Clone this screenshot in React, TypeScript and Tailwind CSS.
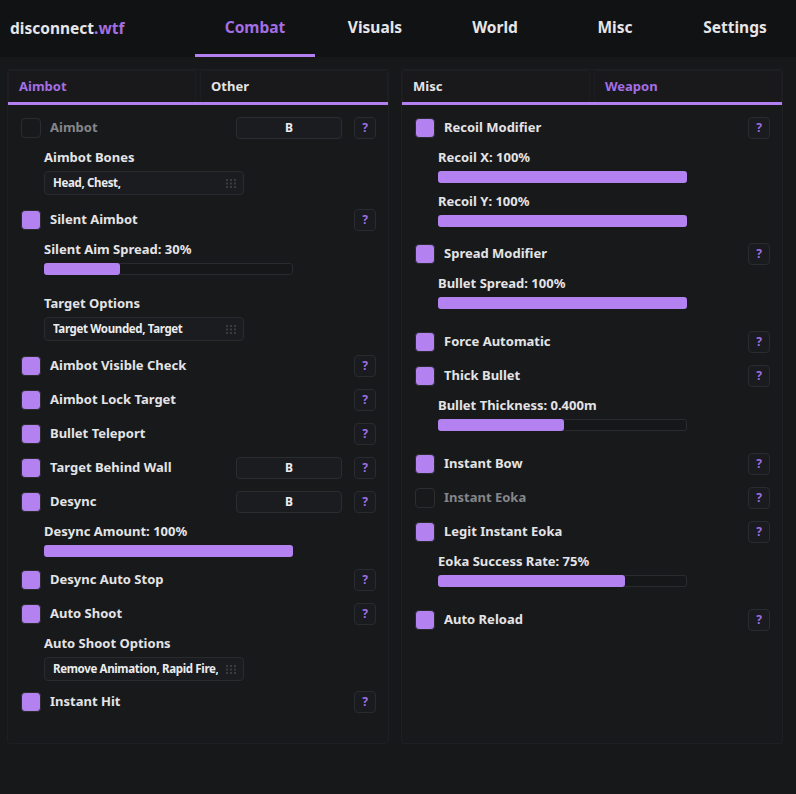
import React from "react";

type Item =
  | { kind: "check"; label: string; on: boolean; bind?: string }
  | { kind: "slider"; label: string; value: number; extra?: number }
  | { kind: "select"; label: string; value: string; extra?: number };

const leftItems: Item[] = [
  { kind: "check", label: "Aimbot", on: false, bind: "B" },
  { kind: "select", label: "Aimbot Bones", value: "Head, Chest,", extra: 2 },
  { kind: "check", label: "Silent Aimbot", on: true },
  { kind: "slider", label: "Silent Aim Spread: 30%", value: 30, extra: 10 },
  { kind: "select", label: "Target Options", value: "Target Wounded, Target", extra: 2 },
  { kind: "check", label: "Aimbot Visible Check", on: true },
  { kind: "check", label: "Aimbot Lock Target", on: true },
  { kind: "check", label: "Bullet Teleport", on: true },
  { kind: "check", label: "Target Behind Wall", on: true, bind: "B" },
  { kind: "check", label: "Desync", on: true, bind: "B" },
  { kind: "slider", label: "Desync Amount: 100%", value: 100 },
  { kind: "check", label: "Desync Auto Stop", on: true },
  { kind: "check", label: "Auto Shoot", on: true },
  { kind: "select", label: "Auto Shoot Options", value: "Remove Animation, Rapid Fire,", extra: -2 },
  { kind: "check", label: "Instant Hit", on: true },
];

const rightItems: Item[] = [
  { kind: "check", label: "Recoil Modifier", on: true },
  { kind: "slider", label: "Recoil X: 100%", value: 100 },
  { kind: "slider", label: "Recoil Y: 100%", value: 100, extra: 4 },
  { kind: "check", label: "Spread Modifier", on: true },
  { kind: "slider", label: "Bullet Spread: 100%", value: 100, extra: 10 },
  { kind: "check", label: "Force Automatic", on: true },
  { kind: "check", label: "Thick Bullet", on: true },
  { kind: "slider", label: "Bullet Thickness: 0.400m", value: 50, extra: 10 },
  { kind: "check", label: "Instant Bow", on: true },
  { kind: "check", label: "Instant Eoka", on: false },
  { kind: "check", label: "Legit Instant Eoka", on: true },
  { kind: "slider", label: "Eoka Success Rate: 75%", value: 75, extra: 10 },
  { kind: "check", label: "Auto Reload", on: true },
];

const tabs = ["Combat", "Visuals", "World", "Misc", "Settings"];

function Grip() {
  return (
    <svg width="10" height="9" viewBox="0 0 10 9" className="shrink-0">
      {[0, 1, 2].map((r) =>
        [0, 1, 2].map((c) => (
          <rect key={`${r}-${c}`} x={c * 4} y={r * 3.5} width="2" height="2" fill="#3a3b3f" />
        ))
      )}
    </svg>
  );
}

function Row({ item }: { item: Item }) {
  if (item.kind === "check") {
    return (
      <div className="flex h-[22px] items-center">
        <div
          className={
            item.on
              ? "h-5 w-5 shrink-0 rounded-[4px] border border-[#2a2b2f] bg-[#b482f0]"
              : "h-5 w-5 shrink-0 rounded-[4px] border border-[#2c2d31] bg-transparent"
          }
        />
        <span className={item.on ? "ml-[9px] text-[13px] font-bold text-[#e4e4e6]" : "ml-[9px] text-[13px] font-bold text-[#85868a]"}>
          {item.label}
        </span>
        <div className="ml-auto flex items-center gap-3">
          {item.bind && (
            <div className="flex h-[22px] w-[106px] items-center justify-center rounded-[4px] border border-[#2c2d31] bg-[#1b1c1f] text-[12px] font-bold text-[#ececee]">
              {item.bind}
            </div>
          )}
          <div className="flex h-[22px] w-[22px] items-center justify-center rounded-[4px] border border-[#2a2b2f] bg-[#1a1b1e] text-[12px] font-bold text-[#9f6ee0]">
            ?
          </div>
        </div>
      </div>
    );
  }
  if (item.kind === "slider") {
    return (
      <div className="ml-[23px]" style={{ marginBottom: item.extra ?? 0 }}>
        <div className="h-[14px] text-[13px] font-bold leading-[13px] text-[#e4e4e6]">{item.label}</div>
        <div className="mt-[6px] h-3 w-[249px] rounded-[3px] border border-[#2a2b2f] bg-[#161719]">
          <div className="-m-px h-3 rounded-[3px] bg-[#b482f0]" style={{ width: `calc(${item.value}% + 2px)` }} />
        </div>
      </div>
    );
  }
  return (
    <div className="ml-[23px]" style={{ marginBottom: item.extra ?? 0 }}>
      <div className="h-[14px] text-[13px] font-bold leading-[13px] text-[#e4e4e6]">{item.label}</div>
      <div className="mt-[6px] flex h-6 w-[200px] items-center justify-between gap-1 overflow-hidden rounded-[4px] border border-[#2a2b2f] bg-[#1b1c1f] pl-2 pr-[7px]">
        <span className="overflow-hidden whitespace-nowrap text-[11.5px] font-bold tracking-[-0.35px] text-[#ececee]">{item.value}</span>
        <Grip />
      </div>
    </div>
  );
}

function Panel({ tabs, active, items }: { tabs: string[]; active: number; items: Item[] }) {
  return (
    <div className="flex h-[675px] w-[382px] flex-col rounded-[3px] border border-[#1e1f22] bg-[#18191b]">
      <div className="flex h-[32px] justify-between">
        {tabs.map((t, i) => (
          <div
            key={t}
            className="flex w-[188px] items-center rounded-t-[3px] border border-b-0 border-[#1d1e21] bg-[#19191c] pl-[10px]"
          >
            <span className={i === active ? "text-[13px] font-bold text-[#a46ee4]" : "text-[13px] font-bold text-[#e4e4e6]"}>{t}</span>
          </div>
        ))}
      </div>
      <div className="h-[3px] bg-[#b47ff0]" />
      <div className="flex flex-col gap-3 pl-[13px] pr-3 pt-3">
        {items.map((it, i) => (
          <Row key={i} item={it} />
        ))}
      </div>
    </div>
  );
}

export default function App() {
  return (
    <div className="h-[794px] w-[796px] bg-[#17181a] font-['Noto_Sans',sans-serif]">
      <div className="flex h-[57px] bg-[#111214]">
        <div className="flex w-[195px] items-center pl-[10px] text-[15.5px] font-bold text-[#e6e6e8]">
          disconnect<span className="text-[#a46ee0]">.wtf</span>
        </div>
        {tabs.map((t, i) => (
          <div
            key={t}
            className={
              i === 0
                ? "flex w-[120px] items-center justify-center border-b-[3px] border-[#b47ff0] pt-[2px] text-[15.5px] font-bold text-[#a46ee4]"
                : "flex w-[120px] items-center justify-center border-b-[3px] border-transparent pt-[2px] text-[15.5px] font-bold text-[#e6e6e8]"
            }
          >
            {t}
          </div>
        ))}
      </div>
      <div className="flex gap-3 pl-[7px] pt-3">
        <Panel tabs={["Aimbot", "Other"]} active={0} items={leftItems} />
        <Panel tabs={["Misc", "Weapon"]} active={1} items={rightItems} />
      </div>
    </div>
  );
}
